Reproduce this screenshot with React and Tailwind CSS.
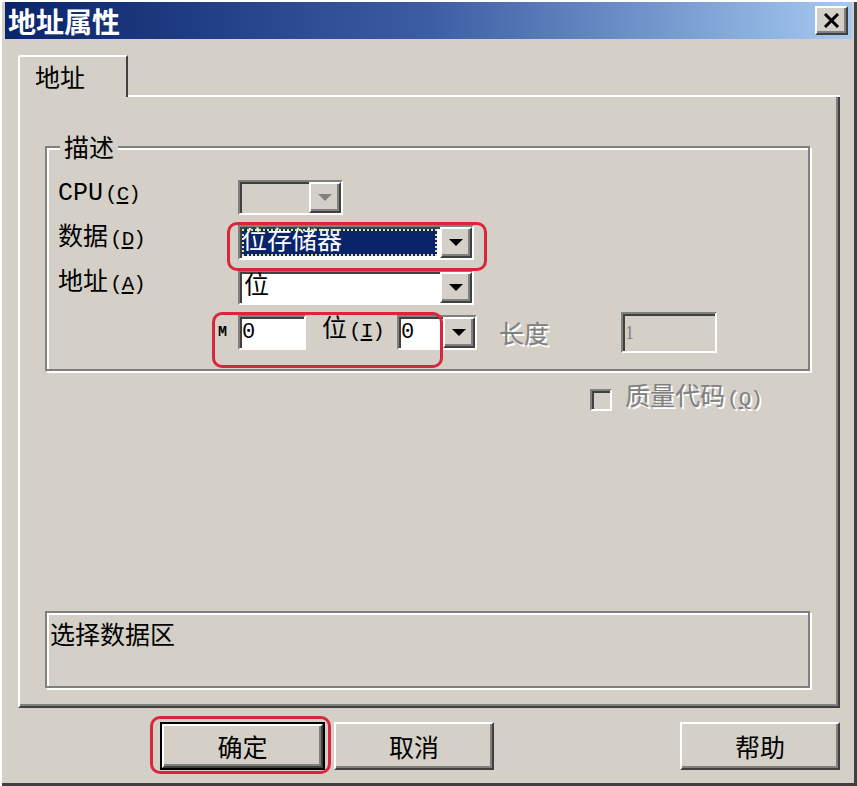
import React from 'react';

const raised =
  'border-2 border-t-white border-l-white border-r-[#404040] border-b-[#404040] shadow-[inset_-2px_-2px_0_#808080] bg-[#d4d0c8]';
const sunken =
  'border-2 border-t-[#808080] border-l-[#808080] border-r-white border-b-white shadow-[inset_2px_2px_0_#404040]';
const etched = 'border-2 border-[#808080] shadow-[2px_2px_0_#fff,inset_2px_2px_0_#fff]';
const disabledText = 'text-[#808080] [text-shadow:2px_2px_0_#fff]';

function Arrow({ disabled }) {
  return (
    <svg width="14" height="8" viewBox="0 0 14 8">
      <polygon points="0,0 14,0 7,7" fill={disabled ? '#808080' : '#000'} />
    </svg>
  );
}

function DropButton({ disabled }) {
  return (
    <div className={`${raised} w-[32px] h-full flex items-center justify-center`}>
      <Arrow disabled={disabled} />
    </div>
  );
}

function Combo({ className = '', disabled, children }) {
  return (
    <div className={`${sunken} ${disabled ? 'bg-[#d4d0c8]' : 'bg-white'} h-[35px] flex ${className}`}>
      <div className="flex-1 flex items-center min-w-0">{children}</div>
      <DropButton disabled={disabled} />
    </div>
  );
}

// hotkey suffix like (C) drawn in a narrower size, as in the bitmap font
function Key({ k }) {
  return (
    <span className="text-[21px] tracking-[-1px] ml-[2px]">
      (<u>{k}</u>)
    </span>
  );
}

function Label({ children }) {
  return <div className="w-[180px] -mt-[6px] text-[25px] leading-[30px] text-black whitespace-nowrap">{children}</div>;
}

function Highlight({ className }) {
  return <div className={`absolute border-[3px] border-[#d8263a] rounded-[10px] ${className}`} />;
}

export default function App() {
  return (
    <div className="relative w-[857px] h-[786px] overflow-hidden bg-[#d4d0c8] pt-[2px] px-[5px] shadow-[inset_2px_2px_0_#fff,inset_-3px_-3px_0_#404040] font-['Liberation_Mono','Noto_Sans_CJK_SC',monospace]">
      {/* Title bar */}
      <div className="h-[37px] flex items-center justify-between pl-[3px] pr-[4px] bg-gradient-to-r from-[#0a246a] via-[#3d5da3] to-[#a6caf0]">
        <span className="text-white font-bold text-[28px] leading-none font-['Noto_Sans_CJK_SC',sans-serif]">地址属性</span>
        <div className={`${raised} w-[33px] h-[29px] flex items-center justify-center`}>
          <svg width="17" height="15" viewBox="0 0 17 15">
            <path d="M2 1 L15 14 M15 1 L2 14" stroke="#000" strokeWidth="3" />
          </svg>
        </div>
      </div>

      {/* Tabs + panel */}
      <div className="pl-[13px] pr-[12px] pt-[16px]">
        <div className="flex h-[42px]">
          <div className="w-[110px] h-[42px] border-t-2 border-l-2 border-white border-r-2 border-r-[#404040] rounded-tl-[3px] pl-[15px] pt-[3px] text-[25px] leading-[32px] font-['Noto_Sans_CJK_SC',sans-serif]">
            地址
          </div>
          <div className="flex-1 border-b-2 border-white" />
        </div>
        <div className="h-[612px] -mt-[1px] border-l-2 border-white border-r-2 border-r-[#404040] border-b-2 border-b-[#404040] shadow-[inset_-2px_-2px_0_#808080] flex flex-col">
          {/* Group box */}
          <div className={`relative ml-[25px] mt-[50px] w-[765px] h-[225px] ${etched}`}>
            <span className="absolute -top-[17px] left-[13px] px-[4px] bg-[#d4d0c8] text-[25px] leading-[30px] font-['Noto_Sans_CJK_SC',sans-serif]">
              描述
            </span>
            <div className="pl-[11px] pt-[32px] flex flex-col gap-[10px]">
              <div className="flex items-center">
                <Label>
                  CPU<Key k="C" />
                </Label>
                <Combo disabled className="w-[105px]" />
              </div>
              <div className="flex items-center">
                <Label>
                  数据<Key k="D" />
                </Label>
                <Combo className="w-[236px]">
                  <div className="ml-[2px] mr-[3px] flex-1 h-[27px] bg-[#0a246a] outline-2 outline-dotted outline-[#e8e0a0] -outline-offset-2 flex items-center text-white text-[25px] leading-none">
                    位存储器
                  </div>
                </Combo>
              </div>
              <div className="flex items-center">
                <Label>
                  地址<Key k="A" />
                </Label>
                <Combo className="w-[236px]">
                  <span className="pl-[4px] text-[25px] leading-none">位</span>
                </Combo>
              </div>
              <div className="flex items-center -mt-[3px]">
                <div className="w-[160px]" />
                <span className="w-[20px] text-[15px] font-bold leading-none">M</span>
                <div className={`${sunken} bg-white w-[68px] h-[35px] flex items-center pl-[2px] text-[22px] leading-none`}>0</div>
                <span className="ml-[16px] w-[59px] text-[25px] leading-[30px] -mt-[2px] whitespace-nowrap">
                  位<Key k="I" />
                </span>
                <Combo className="ml-[16px] w-[80px]">
                  <span className="pl-[2px] text-[22px] leading-none">0</span>
                </Combo>
                <span className={`ml-[22px] w-[52px] text-[25px] leading-[30px] -mt-[2px] ${disabledText} font-['Noto_Sans_CJK_SC',sans-serif]`}>
                  长度
                </span>
                <div className={`${sunken} ml-[70px] w-[96px] h-[41px] flex items-center pl-[2px] text-[18px] leading-none text-[#808080] font-['Liberation_Serif',serif]`}>
                  1
                </div>
              </div>
            </div>
          </div>

          {/* Quality code checkbox */}
          <div className="flex items-center ml-[570px] mt-[18px] h-[22px]">
            <div className="w-[22px] h-[22px] border-2 border-t-[#808080] border-l-[#808080] border-r-white border-b-white shadow-[inset_2px_2px_0_#404040]" />
            <span className={`ml-[13px] text-[25px] leading-[30px] -mt-[2px] whitespace-nowrap ${disabledText}`}>
              质量代码<Key k="Q" />
            </span>
          </div>

          {/* Description */}
          <div className={`ml-[25px] mt-[200px] w-[765px] h-[77px] ${etched} pl-[3px] pt-[5px] text-[25px] leading-[30px] font-['Noto_Sans_CJK_SC',sans-serif]`}>
            选择数据区
          </div>
        </div>
      </div>

      {/* Buttons */}
      <div className="flex pl-[155px] mt-[14px] text-[25px] font-['Noto_Sans_CJK_SC',sans-serif]">
        <div className="w-[165px] h-[48px] border-2 border-black">
          <div className={`${raised} w-full h-full flex items-center justify-center leading-none`}>确定</div>
        </div>
        <div className={`${raised} ml-[9px] w-[160px] h-[48px] flex items-center justify-center leading-none`}>取消</div>
        <div className={`${raised} ml-[186px] w-[160px] h-[48px] flex items-center justify-center leading-none`}>帮助</div>
      </div>

      {/* Annotation highlights */}
      <Highlight className="left-[227px] top-[222px] w-[260px] h-[49px]" />
      <Highlight className="left-[212px] top-[312px] w-[231px] h-[56px]" />
      <Highlight className="left-[150px] top-[716px] w-[181px] h-[58px]" />
    </div>
  );
}
